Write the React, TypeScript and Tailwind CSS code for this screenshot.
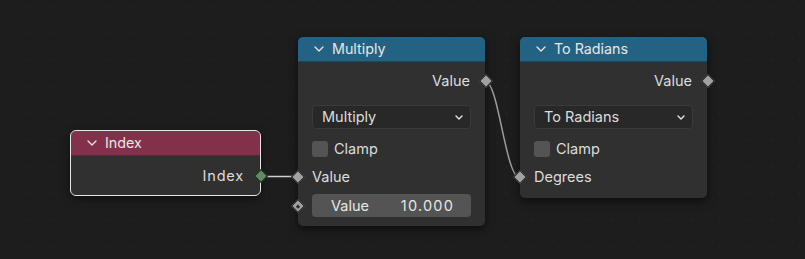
import type { ReactNode } from "react";

function Chevron() {
  return (
    <svg viewBox="0 0 10 6" className="h-[6px] w-[10px] shrink-0" fill="none" stroke="#e6e6e6" strokeWidth="1.3" strokeLinecap="round" strokeLinejoin="round">
      <path d="M1 1l4 4 4-4" />
    </svg>
  );
}

function Socket({ side, color = "bg-[#a1a1a1]", hollow = false }: { side: "left" | "right"; color?: string; hollow?: boolean }) {
  return (
    <span
      className={`absolute top-1/2 flex h-[10px] w-[10px] -translate-y-1/2 rotate-45 items-center justify-center border border-[#161616] ${color} ${
        side === "left" ? "-left-[5px]" : "-right-[6px]"
      }`}
    >
      {hollow ? <span className="h-[3px] w-[3px] bg-[#2a2a2a]" /> : null}
    </span>
  );
}

function Node({ pos, header, title, selected = false, children }: { pos: string; header: string; title: string; selected?: boolean; children: ReactNode }) {
  return (
    <div
      className={`absolute ${pos} rounded-[5px] bg-[#303030] shadow-[0_3px_10px_rgba(0,0,0,0.6)] ${
        selected ? "outline outline-1 outline-[#e6e6e6]" : ""
      }`}
    >
      <div className={`flex h-[25px] items-center gap-[8px] rounded-t-[5px] pl-[16px] ${header} border-b border-black/25`}>
        <Chevron />
        <span className="text-[14.3px] text-[#e6e6e6]">{title}</span>
      </div>
      <div className="flex flex-col">{children}</div>
    </div>
  );
}

function Dropdown({ label }: { label: string }) {
  return (
    <div className="mx-[14px] mt-[12px] flex h-[24px] items-center justify-between rounded-[4px] border border-[#3a3a3a] bg-[#282828] pl-[9px] pr-[7px]">
      <span className="text-[14.5px] text-[#dcdcdc]">{label}</span>
      <svg viewBox="0 0 8 5" className="h-[5px] w-[8px]" fill="none" stroke="#e6e6e6" strokeWidth="1.4" strokeLinecap="round" strokeLinejoin="round">
        <path d="M1 1l3 3 3-3" />
      </svg>
    </div>
  );
}

function Checkbox({ label }: { label: string }) {
  return (
    <div className="mx-[14px] mt-[12px] flex h-[16px] items-center gap-[6px]">
      <span className="h-[16px] w-[16px] rounded-[3px] bg-[#545454]" />
      <span className="text-[14.5px] text-[#dcdcdc]">{label}</span>
    </div>
  );
}

function OutputRow({ label, first = false }: { label: string; first?: boolean }) {
  return (
    <div className={`relative flex h-[24px] items-center justify-end pr-[15px] ${first ? "mt-[7px]" : ""}`}>
      <span className="text-[14.5px] text-[#dcdcdc]">{label}</span>
      <Socket side="right" />
    </div>
  );
}

function InputRow({ label }: { label: string }) {
  return (
    <div className="relative mt-[8px] flex h-[24px] items-center pl-[14px]">
      <span className="text-[14.5px] text-[#dcdcdc]">{label}</span>
      <Socket side="left" />
    </div>
  );
}

export default function App() {
  return (
    <div className="relative h-[259px] w-[805px] overflow-hidden bg-[#1d1d1d] bg-[radial-gradient(circle,#252525_0.8px,transparent_1.2px)] bg-[length:26.67px_26.67px] bg-[position:-13.3px_-6.6px] font-['Inter','Noto_Sans',sans-serif]">
      <svg className="pointer-events-none absolute inset-0" width="805" height="259" fill="none">
        <path d="M262 176.5 L295 176.5" stroke="#cfcfcf" strokeWidth="1.6" />
        <path d="M486 82 C498 82 506 177 519 177" stroke="#9c9c9c" strokeWidth="1.5" />
      </svg>

      <Node pos="left-[71px] top-[131px] w-[189px]" header="bg-[#83314a]" title="Index" selected>
        <div className="pb-[7px]">
          <div className="relative mt-[8px] flex h-[24px] items-center justify-end pr-[16px]">
            <span className="text-[14.5px] tracking-[0.8px] text-[#dcdcdc]">Index</span>
            <Socket side="right" color="bg-[#5f8c64]" />
          </div>
        </div>
      </Node>

      <Node pos="left-[298px] top-[37px] w-[187px]" header="bg-[#246283]" title="Multiply">
        <OutputRow label="Value" first />
        <Dropdown label="Multiply" />
        <Checkbox label="Clamp" />
        <InputRow label="Value" />
        <div className="relative mb-[9px] mt-[5px] h-[23px]">
          <div className="mx-[14px] flex h-[23px] items-center justify-between rounded-[4px] bg-[#545454] pl-[19px] pr-[17px]">
            <span className="text-[14.5px] text-[#e6e6e6]">Value</span>
            <span className="text-[14.5px] tracking-[1.2px] text-[#e6e6e6]">10.000</span>
          </div>
          <Socket side="left" hollow />
        </div>
      </Node>

      <Node pos="left-[520px] top-[37px] w-[187px]" header="bg-[#246283]" title="To Radians">
        <OutputRow label="Value" first />
        <Dropdown label="To Radians" />
        <Checkbox label="Clamp" />
        <div className="pb-[9px]">
          <InputRow label="Degrees" />
        </div>
      </Node>
    </div>
  );
}
